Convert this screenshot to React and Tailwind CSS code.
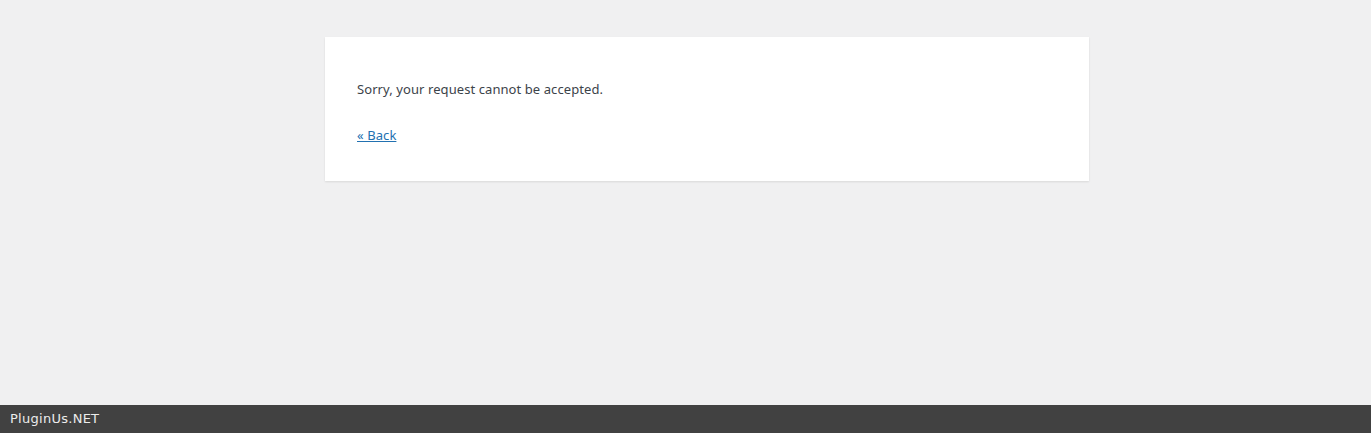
export default function App() {
  return (
    <div className="flex h-screen flex-col bg-[#f0f0f1]">
      <div className="flex-1 pt-[37px]">
        <div
          className="ml-[325px] w-[764px] bg-white px-8 py-4 text-[13px] leading-[21px] tracking-[0.08px] text-[#3c434a] shadow-[0_1px_2px_rgba(0,0,0,0.1)]"
          style={{ fontFamily: '"Noto Sans", sans-serif' }}
        >
          <p className="mt-[26px] mb-[25px]">Sorry, your request cannot be accepted.</p>
          <p className="mb-[19px]">
            <a href="#" className="text-[#2271b1] underline">« Back</a>
          </p>
        </div>
      </div>
      <div
        className="flex h-[28px] items-center bg-[#414141] px-[10px] text-[13px] tracking-[0.27px] text-[#ececec]"
        style={{ fontFamily: '"DejaVu Sans", sans-serif' }}
      >
        PluginUs.NET
      </div>
    </div>
  );
}
